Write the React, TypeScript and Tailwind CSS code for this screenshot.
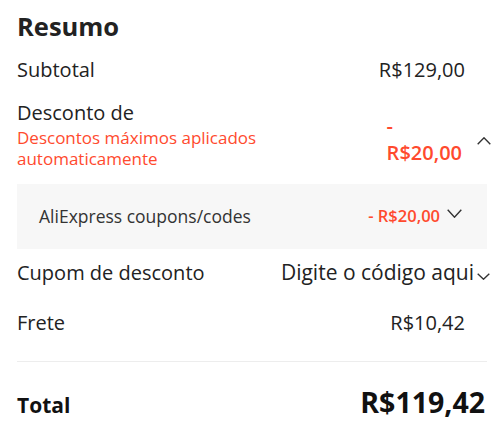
import React from "react";

function Chevron({ up, w, h, className }: { up?: boolean; w: number; h: number; className?: string }) {
  return (
    <svg width={w} height={h} viewBox={`0 0 ${w} ${h}`} className={className} fill="none">
      {up ? (
        <polyline points={`0.7,${h - 0.7} ${w / 2},0.8 ${w - 0.7},${h - 0.7}`} stroke="#333" strokeWidth="1.4" />
      ) : (
        <polyline points={`0.7,0.7 ${w / 2},${h - 0.8} ${w - 0.7},0.7`} stroke="#333" strokeWidth="1.4" />
      )}
    </svg>
  );
}

export default function App() {
  return (
    <div
      className="w-[500px] h-[430px] bg-white pl-[17px] pr-[9px] text-[#222]"
      style={{ fontFamily: '"Open Sans", sans-serif' }}
    >
      <div className="pt-[10px] text-[25.5px] leading-[32px] font-bold">Resumo</div>

      <div className="mt-[14px] flex justify-between text-[20px] leading-[27px]">
        <span>Subtotal</span>
        <span className="mr-[26px]">R$129,00</span>
      </div>

      <div className="mt-[16px] flex justify-between">
        <div>
          <div className="text-[20px] leading-[27px]">Desconto de</div>
          <div className="mt-[1px] text-[17px] leading-[21px] text-[#ff4a2e]">
            <div>Descontos máximos aplicados</div>
            <div>automaticamente</div>
          </div>
        </div>
        <div className="flex items-start pt-[13px]">
          <div className="text-[20px] leading-[27px] text-[#ff4a2e] font-semibold">
            <div>-</div>
            <div>R$20,00</div>
          </div>
          <Chevron up w={14} h={8} className="ml-[15px] mt-[25px]" />
        </div>
      </div>

      <div className="mt-[15px] mr-[4px] h-[65px] bg-[#f7f7f7] flex items-center justify-between pl-[22px] pr-[25px]">
        <span className="text-[17.5px] text-[#333]">AliExpress coupons/codes</span>
        <div className="flex items-center">
          <span className="text-[16.5px] text-[#ff4a2e] font-semibold">- R$20,00</span>
          <Chevron w={15} h={9} className="ml-[7px] -mt-[7px]" />
        </div>
      </div>

      <div className="mt-[10px] flex justify-between items-center leading-[27px]">
        <span className="text-[20px]">Cupom de desconto</span>
        <div className="flex items-center mr-[1px]">
          <span className="text-[21px]">Digite o código aqui</span>
          <Chevron w={13} h={7} className="ml-[3px] mt-[7px]" />
        </div>
      </div>

      <div className="mt-[23px] flex justify-between text-[20px] leading-[27px]">
        <span>Frete</span>
        <span className="mr-[26px]">R$10,42</span>
      </div>

      <div className="mt-[25px] mr-[4px] h-px bg-[#ededed]" />

      <div className="mt-[22px] mr-[4px] flex justify-between items-baseline">
        <span className="text-[21px] leading-[36px] font-bold text-[#111]">Total</span>
        <span className="text-[28.5px] leading-[36px] font-bold text-[#111] mr-[2px]">R$119,42</span>
      </div>
    </div>
  );
}
